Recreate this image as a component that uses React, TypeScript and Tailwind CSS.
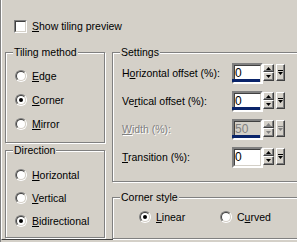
import React from 'react';

const face = 'bg-[#d4d0c8]';

function Radio({ checked }: { checked?: boolean }) {
  return (
    <span className="block w-[12px] h-[12px] shrink-0 rounded-full border border-t-[#808080] border-l-[#808080] border-b-white border-r-white">
      <span className="flex w-full h-full items-center justify-center rounded-full border border-t-[#404040] border-l-[#404040] border-b-[#d4d0c8] border-r-[#d4d0c8] bg-white">
        {checked && <span className="w-[4px] h-[4px] rounded-full bg-black" />}
      </span>
    </span>
  );
}

function RadioRow({ label, u, checked, className = '' }: { label: string; u: number; checked?: boolean; className?: string }) {
  return (
    <div className={`flex items-center h-[12px] gap-[5px] ${className}`}>
      <Radio checked={checked} />
      <span className="leading-[13px]">
        {label.slice(0, u)}
        <span className="underline underline-offset-[1px]">{label[u]}</span>
        {label.slice(u + 1)}
      </span>
    </div>
  );
}

function Group({ title, className, children }: { title: string; className: string; children: React.ReactNode }) {
  return (
    <div className={`relative border border-[#808080] shadow-[inset_1px_1px_0_#fff,1px_1px_0_#fff] ${className}`}>
      <span className={`absolute left-[7px] -top-[7px] px-[1px] leading-[13px] ${face}`}>{title}</span>
      {children}
    </div>
  );
}

const raised =
  'border border-t-white border-l-white border-r-[#404040] border-b-[#404040] shadow-[inset_-1px_-1px_0_#808080] bg-[#d4d0c8] flex items-center justify-center';

function Arrow({ up, dim }: { up?: boolean; dim?: boolean }) {
  return (
    <svg width="5" height="3" viewBox="0 0 5 3">
      <polygon points={up ? '2.5,0 5,3 0,3' : '0,0 5,0 2.5,3'} fill={dim ? '#808080' : '#000'} />
    </svg>
  );
}

function Spin({ value, bar, disabled }: { value: string; bar?: boolean; disabled?: boolean }) {
  return (
    <div className="flex items-start">
      <div
        className={`relative w-[31px] h-[21px] border-2 border-t-[#808080] border-l-[#808080] border-b-white border-r-white ${
          disabled ? 'bg-[#d4d0c8] text-[#808080]' : 'bg-white text-black'
        }`}
      >
        <div className="absolute inset-0 border border-t-[#404040] border-l-[#404040] border-b-[#d4d0c8] border-r-[#d4d0c8]" />
        <span className="absolute left-[1px] top-[1px] text-[12px] leading-[14px]">{value}</span>
        {bar && <div className="absolute -left-[2px] bottom-0 h-[3px] w-[28px] bg-[#0a246a]" />}
      </div>
      <div className="flex flex-col mt-[1px] w-[11px]">
        <div className={`h-[8px] ${raised}`}>
          <Arrow up dim={disabled} />
        </div>
        <div className={`h-[9px] ${raised}`}>
          <Arrow dim={disabled} />
        </div>
      </div>
      <div className={`ml-[2px] mt-[1px] w-[9px] h-[17px] ${raised}`}>
        <svg width="5" height="5" viewBox="0 0 5 5">
          <rect x="0" y="0" width="5" height="1" fill={disabled ? '#808080' : '#000'} />
          <polygon points="0,2 5,2 2.5,5" fill={disabled ? '#808080' : '#000'} />
        </svg>
      </div>
    </div>
  );
}

function Row({ label, u, value, bar, disabled }: { label: string; u: number; value: string; bar?: boolean; disabled?: boolean }) {
  return (
    <div className="flex items-center h-[21px]">
      <span
        className={`w-[110px] shrink-0 leading-[13px] ${disabled ? 'text-[#808080] [text-shadow:1px_1px_0_#fff]' : ''}`}
      >
        {label.slice(0, u)}
        <span className="underline underline-offset-[1px]">{label[u]}</span>
        {label.slice(u + 1)}
      </span>
      <Spin value={value} bar={bar} disabled={disabled} />
    </div>
  );
}

export default function App() {
  return (
    <div
      className={`w-[297px] h-[242px] overflow-hidden ${face} text-black text-[10.5px] border-l border-[#808080]`}
      style={{ fontFamily: '"Liberation Sans", Arial, sans-serif' }}
    >
      <div className="h-[240px] border-l border-white border-b border-b-[#404040]">
        <div className="pt-[20px] pl-[12px] flex items-center gap-[5px] h-[33px]">
          <span className="block w-[13px] h-[13px] shrink-0 border border-t-[#808080] border-l-[#808080] border-b-white border-r-white">
            <span className="block w-full h-full border border-t-[#404040] border-l-[#404040] border-b-[#d4d0c8] border-r-[#d4d0c8] bg-white" />
          </span>
          <span className="leading-[13px]">
            <span className="underline underline-offset-[1px]">S</span>how tiling preview
          </span>
        </div>

        <div className="flex mt-[19px] pl-[3px]">
          <div className="flex flex-col w-[100px] shrink-0">
            <Group title="Tiling method" className="h-[91px] pt-[17px] pl-[9px] flex flex-col gap-[12px]">
              <RadioRow label="Edge" u={0} />
              <RadioRow label="Corner" u={0} checked />
              <RadioRow label="Mirror" u={0} />
            </Group>
            <Group title="Direction" className="mt-[7px] h-[88px] pt-[18px] pl-[9px] flex flex-col gap-[11px]">
              <RadioRow label="Horizontal" u={0} />
              <RadioRow label="Vertical" u={0} />
              <RadioRow label="Bidirectional" u={0} checked />
            </Group>
          </div>

          <div className="flex flex-col ml-[7px] w-[200px] shrink-0">
            <Group title="Settings" className="h-[130px] pt-[10px] pl-[9px] flex flex-col gap-[7px]">
              <Row label="Horizontal offset (%):" u={1} value="0" bar />
              <Row label="Vertical offset (%):" u={2} value="0" bar />
              <Row label="Width (%):" u={0} value="50" bar disabled />
              <Row label="Transition (%):" u={0} value="0" />
            </Group>
            <Group title="Corner style" className="mt-[15px] h-[42px] pt-[13px] pl-[26px] flex">
              <RadioRow label="Linear" u={0} checked className="w-[81px] shrink-0" />
              <RadioRow label="Curved" u={1} />
            </Group>
          </div>
        </div>
      </div>
    </div>
  );
}
